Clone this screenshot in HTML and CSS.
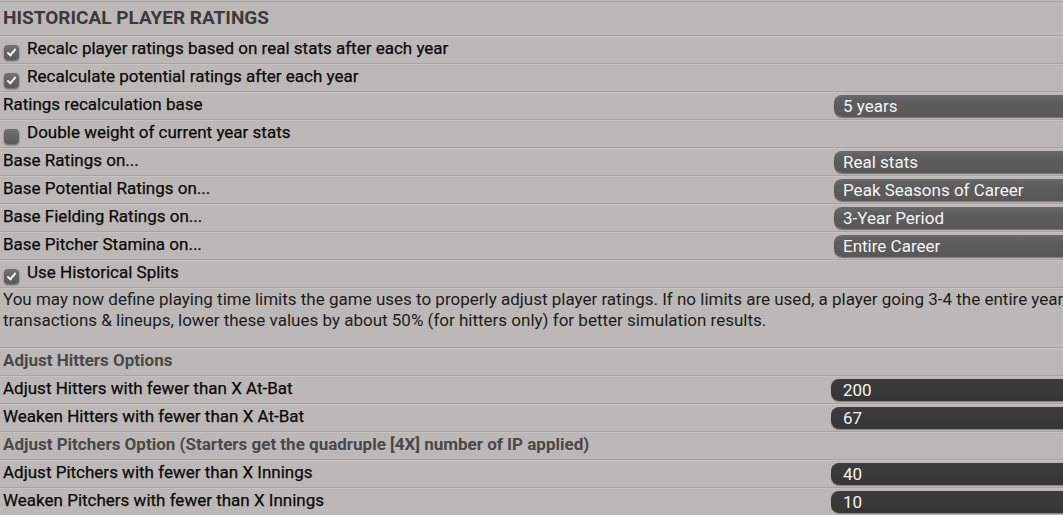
FILE: index.html
```html
<!DOCTYPE html>
<html lang="en">
<head>
    <meta charset="UTF-8">
    <title>Historical Player Ratings</title>
    <link rel="stylesheet" href="styles.css">
</head>
<body>
    <div class="panel">
        <div class="title">HISTORICAL PLAYER RATINGS</div>

        <div class="row"><span class="check on"></span><span class="label">Recalc player ratings based on real stats after each year</span></div>
        <div class="row"><span class="check on"></span><span class="label">Recalculate potential ratings after each year</span></div>
        <div class="row"><span class="label">Ratings recalculation base</span><span class="select">5 years</span></div>
        <div class="row"><span class="check"></span><span class="label">Double weight of current year stats</span></div>
        <div class="row"><span class="label">Base Ratings on...</span><span class="select">Real stats</span></div>
        <div class="row"><span class="label">Base Potential Ratings on...</span><span class="select">Peak Seasons of Career</span></div>
        <div class="row"><span class="label">Base Fielding Ratings on...</span><span class="select">3-Year Period</span></div>
        <div class="row"><span class="label">Base Pitcher Stamina on...</span><span class="select">Entire Career</span></div>
        <div class="row"><span class="check on"></span><span class="label">Use Historical Splits</span></div>

        <div class="note">
            You may now define playing time limits the game uses to properly adjust player ratings. If no limits are used, a player going 3-4 the entire year<br>
            transactions &amp; lineups, lower these values by about 50% (for hitters only) for better simulation results.
        </div>

        <div class="row section"><span class="label">Adjust Hitters Options</span></div>
        <div class="row"><span class="label">Adjust Hitters with fewer than X At-Bat</span><span class="number">200</span></div>
        <div class="row"><span class="label">Weaken Hitters with fewer than X At-Bat</span><span class="number">67</span></div>
        <div class="row section"><span class="label">Adjust Pitchers Option (Starters get the quadruple [4X] number of IP applied)</span></div>
        <div class="row"><span class="label">Adjust Pitchers with fewer than X Innings</span><span class="number">40</span></div>
        <div class="row"><span class="label">Weaken Pitchers with fewer than X Innings</span><span class="number">10</span></div>
    </div>
</body>
</html>
```

FILE: styles.css
```css
html, body {
    margin: 0;
    padding: 0;
    overflow: hidden;
}
body {
    font-family: Roboto, 'Liberation Sans', sans-serif;
    font-size: 17px;
    color: #0a0a0a;
    background-color: #bcb8b7;
    width: 1063px;
    height: 515px;
}
.panel {
    width: 1300px;
    border-top: 1px solid #a6a2a1;
    margin-top: 1px;
}
.title {
    height: 33px;
    line-height: 32px;
    padding-left: 3px;
    font-size: 19px;
    font-weight: bold;
    color: #3b3a3a;
    border-bottom: 1px solid #a6a2a1;
    box-shadow: 0 1px 0 #c6c2c1;
}
.row {
    display: flex;
    align-items: center;
    height: 27px;
    border-bottom: 1px solid #a6a2a1;
    box-shadow: 0 1px 0 #c6c2c1;
    white-space: nowrap;
}
.label {
    padding-left: 3px;
    margin-bottom: 3px;
    flex: 0 0 828px;
    -webkit-text-stroke: 0.25px currentColor;
}
.check + .label {
    padding-left: 8px;
    flex-basis: 780px;
}
.section .label {
    font-weight: bold;
    color: #4a4848;
    -webkit-text-stroke: 0;
}
.check {
    flex: 0 0 auto;
    width: 15px;
    height: 15px;
    margin-left: 4px;
    margin-top: 5px;
    border-radius: 4px;
    background: linear-gradient(#737171, #5a5959);
    box-shadow: 0 1px 2px rgba(0, 0, 0, 0.5);
    position: relative;
}
.check.on::after {
    content: "";
    position: absolute;
    left: 5px;
    top: 2px;
    width: 3px;
    height: 7px;
    border: solid #f2f2f2;
    border-width: 0 2px 2px 0;
    transform: rotate(40deg);
}
.select, .number {
    display: block;
    height: 22px;
    line-height: 22px;
    width: 300px;
    color: #f4f4f4;
    border-radius: 8px 0 0 8px;
}
.select {
    margin-left: 3px;
    padding-left: 9px;
    background: linear-gradient(#6c6b6b, #5e5d5d 30%, #595858);
    box-shadow: 0 1px 1px rgba(0, 0, 0, 0.35);
}
.number {
    padding-left: 12px;
    background: linear-gradient(#3d3d3d, #353535);
    box-shadow: 0 1px 1px rgba(0, 0, 0, 0.3);
}
.note {
    height: 58px;
    padding: 1px 3px 0;
    line-height: 21px;
    color: #1c1c1c;
    white-space: nowrap;
    border-bottom: 1px solid #a6a2a1;
    box-shadow: 0 1px 0 #c6c2c1;
}
```
